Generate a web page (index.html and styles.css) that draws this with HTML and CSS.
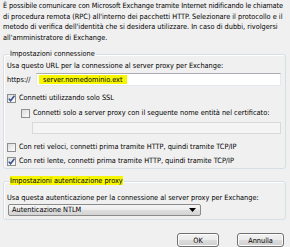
FILE: index.html
```html
<!DOCTYPE html>
<html lang="it">

<head>
    <meta charset="UTF-8">
    <meta name="viewport" content="width=device-width, initial-scale=1.0">
    <title>Impostazioni proxy Exchange</title>
    <link rel="stylesheet" href="styles.css">
</head>

<body>
    <div class="dialog">
        <p class="intro">
            <span class="intro__line intro__line--tight">È possibile comunicare con Microsoft Exchange tramite Internet nidificando le chiamate</span>
            <span class="intro__line">di procedura remota (RPC) all'interno dei pacchetti HTTP. Selezionare il protocollo e il</span>
            <span class="intro__line">metodo di verifica dell'identità che si desidera utilizzare. In caso di dubbi, rivolgersi</span>
            <span class="intro__line">all'amministratore di Exchange.</span>
        </p>

        <fieldset class="group group--connection">
            <legend class="group__title">Impostazioni connessione</legend>
            <div class="group__text">Usa questo URL per la connessione al server proxy per Exchange:</div>
            <div class="url-row">
                <span class="url-row__prefix">https://</span>
                <div class="textbox textbox--url"><span class="marker">server.nomedominio.ext</span></div>
            </div>
            <div class="check check--ssl">
                <span class="check__box">
                    <svg width="9" height="9" viewBox="0 0 9 9">
                        <path d="M1.8 4.6 L3.6 6.8 L7.4 1.8" fill="none" stroke="#31508f" stroke-width="1.5" />
                    </svg>
                </span>
                Connetti utilizzando solo SSL
            </div>
            <div class="check check--nested">
                <span class="check__box"></span>
                Connetti solo a server proxy con il seguente nome entità nel certificato:
            </div>
            <div class="textbox textbox--cert"></div>
            <div class="check check--fast">
                <span class="check__box"></span>
                Con reti veloci, connetti prima tramite HTTP, quindi tramite TCP/IP
            </div>
            <div class="check check--slow">
                <span class="check__box">
                    <svg width="9" height="9" viewBox="0 0 9 9">
                        <path d="M1.8 4.6 L3.6 6.8 L7.4 1.8" fill="none" stroke="#31508f" stroke-width="1.5" />
                    </svg>
                </span>
                Con reti lente, connetti prima tramite HTTP, quindi tramite TCP/IP
            </div>
        </fieldset>

        <fieldset class="group group--auth">
            <legend class="group__title"><span class="marker">Impostazioni autenticazione proxy</span></legend>
            <div class="group__text">Usa questa autenticazione per la connessione al server proxy per Exchange:</div>
            <div class="combo">
                <span class="combo__value">Autenticazione NTLM</span>
                <svg class="combo__arrow" width="7" height="4" viewBox="0 0 7 4">
                    <path d="M0 0 H7 L3.5 4 Z" fill="#000" />
                </svg>
            </div>
        </fieldset>

        <div class="actions">
            <button class="btn btn--ok">OK</button>
            <button class="btn btn--cancel">Annulla</button>
        </div>
    </div>
</body>

</html>
```

FILE: styles.css
```css
:root {
    --bg-color: #f0f0f0;
    --text-color: #000;
    --group-border: #d5dfe5;
    --field-border: #abadb3;
    --marker-color: #f6f600;
}

body {
    margin: 0;
    background: var(--bg-color);
    color: var(--text-color);
    font-family: "DejaVu Sans Condensed", "DejaVu Sans", sans-serif;
    font-size: 7.3px;
    line-height: 10px;
}

.dialog {
    width: 290px;
    height: 247px;
    overflow: hidden;
}

.intro {
    margin: 0;
    padding: 1px 0 0 3px;
    line-height: 10.5px;
}

.intro__line {
    display: block;
    white-space: nowrap;
}

.intro__line--tight {
    letter-spacing: -0.1px;
}

.group {
    margin: 6px 4px 0 3px;
    padding: 2px 4px 2px 3px;
    border: 1px solid var(--group-border);
    border-radius: 3px;
    box-shadow: inset 1px 1px 0 #fff;
}

.group__title {
    padding: 0 1px;
    margin-left: 2px;
}

.group__text {
    white-space: nowrap;
}

.marker {
    background: var(--marker-color);
}

.url-row {
    display: flex;
    align-items: center;
    margin-top: 2px;
}

.url-row__prefix {
    width: 29px;
}

.textbox {
    box-sizing: border-box;
    background: #fff;
    border: 1px solid #e3e9ef;
    border-top-color: var(--field-border);
}

.textbox--url {
    flex: 1;
    height: 13px;
    padding-left: 2px;
    line-height: 11px;
}

.textbox--url .marker {
    padding: 0 4px;
}

.textbox--cert {
    height: 12px;
    margin: 4px 0 0 25px;
    background: #f4f4f4;
    border-color: #d9d9d9;
}

.check {
    display: flex;
    align-items: center;
    gap: 3px;
    white-space: nowrap;
}

.check__box {
    box-sizing: border-box;
    width: 9px;
    height: 9px;
    display: flex;
    border: 1px solid #8e8f8f;
    background: linear-gradient(135deg, #dcdcdc, #fdfdfd);
}

.check__box svg {
    margin: -1px;
}

.check--ssl {
    margin-top: 7px;
}

.check--nested {
    margin-top: 5px;
    padding-left: 14px;
}

.check--fast {
    margin-top: 8px;
}

.check--slow {
    margin-top: 4px;
}

.group--auth {
    margin-top: 7px;
    padding-top: 7px;
    padding-bottom: 3px;
}

.combo {
    box-sizing: border-box;
    width: 193px;
    height: 12px;
    margin: 1px 0 0 1px;
    padding: 0 4px 0 3px;
    display: flex;
    align-items: center;
    justify-content: space-between;
    border: 1px solid #8a8a8a;
    border-radius: 2px;
    background: linear-gradient(#f6f6f6, #ebebeb 50%, #dedede 50%, #d4d4d4);
}

.actions {
    display: flex;
    justify-content: flex-end;
    gap: 18px;
    margin: 13px 6px 0 0;
}

.btn {
    box-sizing: border-box;
    height: 14px;
    padding: 0;
    font-family: inherit;
    font-size: 7.3px;
    color: var(--text-color);
    border: 1px solid #707070;
    border-radius: 3px;
    background: linear-gradient(#f2f2f2, #ebebeb 50%, #dddddd 50%, #cfcfcf);
    box-shadow: inset 0 0 0 1px #fcfcfc;
}

.btn--ok {
    width: 42px;
}

.btn--cancel {
    width: 47px;
}
```
